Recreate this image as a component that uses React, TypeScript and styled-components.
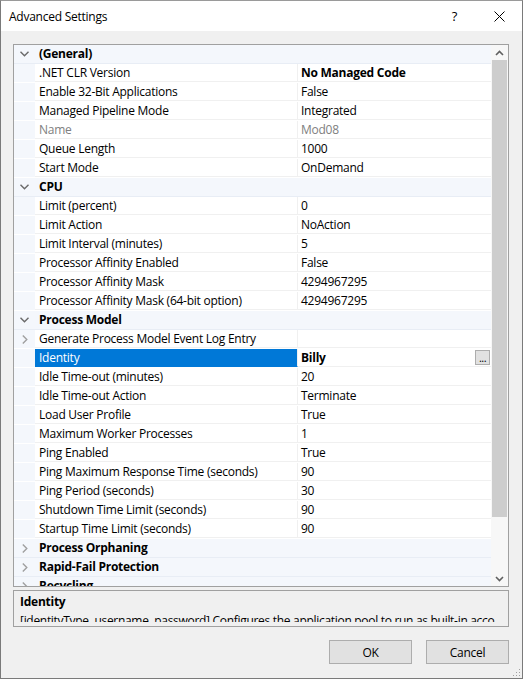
import styled, { createGlobalStyle } from "styled-components"

const GlobalStyle = createGlobalStyle`
  html, body {
    margin: 0;
    padding: 0;
    background: #ffffff;
  }
  * {
    box-sizing: border-box;
  }
`

const Window = styled.div`
  width: 523px;
  height: 679px;
  border: 1px solid #7a7a7a;
  border-top-color: #9a9a9a;
  background: #f0f0f0;
  display: flex;
  flex-direction: column;
  font-family: "Open Sans", "Noto Sans", sans-serif;
  font-size: 12px;
  letter-spacing: -0.25px;
  color: #000000;
  position: relative;
  overflow: hidden;
`

const TitleBar = styled.div`
  height: 30px;
  background: #ffffff;
  display: flex;
  align-items: center;
  padding-left: 8px;
`

const Title = styled.div`
  flex: 1;
  font-size: 12px;
`

const TitleButton = styled.div`
  width: 45px;
  height: 30px;
  display: flex;
  align-items: center;
  justify-content: center;
  font-size: 13px;
`

const Body = styled.div`
  flex: 1;
  display: flex;
  flex-direction: column;
  padding: 13px 13px 0 12px;
`

const GridBox = styled.div`
  height: 543px;
  border: 1px solid #a0a0a0;
  background: #ffffff;
  display: flex;
`

const Rows = styled.div`
  flex: 1;
  overflow: hidden;
  display: flex;
  flex-direction: column;
`

const Row = styled.div<{ $category?: boolean }>`
  flex: none;
  height: 19px;
  display: grid;
  grid-template-columns: 21px 263px 1fr;
  background: ${(p) => (p.$category ? "#f4f7fc" : "#ffffff")};
  border-bottom: 1px solid ${(p) => (p.$category ? "#e8edf5" : "transparent")};
`

const Gutter = styled.div`
  background: #f4f7fc;
  display: flex;
  align-items: center;
  justify-content: center;
`

const CategoryLabel = styled.div`
  grid-column: 2 / 4;
  font-weight: 700;
  padding-left: 4px;
  line-height: 18px;
  white-space: nowrap;
`

const NameCell = styled.div<{ $selected?: boolean; $disabled?: boolean }>`
  padding-left: 4px;
  line-height: 18px;
  white-space: nowrap;
  overflow: hidden;
  background: ${(p) => (p.$selected ? "#0078d7" : "#ffffff")};
  color: ${(p) => (p.$selected ? "#ffffff" : p.$disabled ? "#808080" : "#000000")};
  border-bottom: 1px solid ${(p) => (p.$selected ? "#0078d7" : "#f0f0f0")};
  border-right: 1px solid #f0f0f0;
`

const ValueCell = styled.div<{ $bold?: boolean; $disabled?: boolean }>`
  padding-left: 3px;
  padding-right: 1px;
  line-height: 18px;
  white-space: nowrap;
  overflow: hidden;
  display: flex;
  align-items: center;
  font-weight: ${(p) => (p.$bold ? 700 : 400)};
  color: ${(p) => (p.$disabled ? "#808080" : "#000000")};
  border-bottom: 1px solid #f0f0f0;
`

const EllipsisButton = styled.div`
  margin-left: auto;
  width: 15px;
  height: 15px;
  border: 1px solid #adadad;
  background: #e1e1e1;
  font-weight: 400;
  font-size: 11px;
  line-height: 14px;
  text-align: center;
  letter-spacing: -0.5px;
`

const ScrollBar = styled.div`
  width: 17px;
  background: #f7f7f7;
  display: flex;
  flex-direction: column;
  align-items: center;
`

const ScrollArrow = styled.div`
  height: 15px;
  width: 17px;
  display: flex;
  align-items: center;
  justify-content: center;
`

const ScrollTrack = styled.div`
  flex: 1;
  width: 15px;
  padding-bottom: 54px;
  display: flex;
`

const ScrollThumb = styled.div`
  flex: 1;
  background: #cdcdcd;
`

const DescPanel = styled.div`
  margin-top: 3px;
  height: 37px;
  border: 1px solid #a0a0a0;
  padding: 1px 3px 0 6px;
`

const DescContent = styled.div`
  height: 30px;
  overflow: hidden;
  line-height: 19px;
  white-space: nowrap;
`

const DescTitle = styled.div`
  font-weight: 700;
`

const DescText = styled.div`
  letter-spacing: -0.3px;
`

const Footer = styled.div`
  display: flex;
  justify-content: flex-end;
  gap: 14px;
  padding-top: 13px;
`

const Button = styled.div`
  width: 83px;
  height: 24px;
  border: 1px solid #adadad;
  background: #e1e1e1;
  display: flex;
  align-items: center;
  justify-content: center;
`

const Grip = styled.svg`
  position: absolute;
  right: 1px;
  bottom: 1px;
`

type Prop = {
  name: string
  value?: string
  bold?: boolean
  disabled?: boolean
  selected?: boolean
  expandable?: boolean
  button?: boolean
}

type Item = { category: string; expanded: boolean; props: Prop[] }

const items: Item[] = [
  {
    category: "(General)",
    expanded: true,
    props: [
      { name: ".NET CLR Version", value: "No Managed Code", bold: true },
      { name: "Enable 32-Bit Applications", value: "False" },
      { name: "Managed Pipeline Mode", value: "Integrated" },
      { name: "Name", value: "Mod08", disabled: true },
      { name: "Queue Length", value: "1000" },
      { name: "Start Mode", value: "OnDemand" },
    ],
  },
  {
    category: "CPU",
    expanded: true,
    props: [
      { name: "Limit (percent)", value: "0" },
      { name: "Limit Action", value: "NoAction" },
      { name: "Limit Interval (minutes)", value: "5" },
      { name: "Processor Affinity Enabled", value: "False" },
      { name: "Processor Affinity Mask", value: "4294967295" },
      { name: "Processor Affinity Mask (64-bit option)", value: "4294967295" },
    ],
  },
  {
    category: "Process Model",
    expanded: true,
    props: [
      { name: "Generate Process Model Event Log Entry", value: "", expandable: true },
      { name: "Identity", value: "Billy", bold: true, selected: true, button: true },
      { name: "Idle Time-out (minutes)", value: "20" },
      { name: "Idle Time-out Action", value: "Terminate" },
      { name: "Load User Profile", value: "True" },
      { name: "Maximum Worker Processes", value: "1" },
      { name: "Ping Enabled", value: "True" },
      { name: "Ping Maximum Response Time (seconds)", value: "90" },
      { name: "Ping Period (seconds)", value: "30" },
      { name: "Shutdown Time Limit (seconds)", value: "90" },
      { name: "Startup Time Limit (seconds)", value: "90" },
    ],
  },
  { category: "Process Orphaning", expanded: false, props: [] },
  { category: "Rapid-Fail Protection", expanded: false, props: [] },
  { category: "Recycling", expanded: false, props: [] },
]

function Chevron({ open }: { open: boolean }) {
  return open ? (
    <svg width="9" height="6" viewBox="0 0 9 6">
      <polyline points="0.5,0.8 4.5,4.8 8.5,0.8" fill="none" stroke="#6a6a6a" strokeWidth="1.4" />
    </svg>
  ) : (
    <svg width="6" height="9" viewBox="0 0 6 9">
      <polyline points="0.8,0.5 4.8,4.5 0.8,8.5" fill="none" stroke="#a0a0a0" strokeWidth="1.4" />
    </svg>
  )
}

function ArrowIcon({ up }: { up: boolean }) {
  return (
    <svg width="9" height="6" viewBox="0 0 9 6">
      <polyline
        points={up ? "1,5 4.5,1.5 8,5" : "1,1 4.5,4.5 8,1"}
        fill="none"
        stroke="#606060"
        strokeWidth="1.6"
      />
    </svg>
  )
}

export default function App() {
  return (
    <>
      <GlobalStyle />
      <Window>
        <TitleBar>
          <Title>Advanced Settings</Title>
          <TitleButton>?</TitleButton>
          <TitleButton>
            <svg width="11" height="11" viewBox="0 0 11 11">
              <path d="M0.5 0.5 L10.5 10.5 M10.5 0.5 L0.5 10.5" stroke="#000" strokeWidth="1" />
            </svg>
          </TitleButton>
        </TitleBar>
        <Body>
          <GridBox>
            <Rows>
              {items.map((item) => (
                <div key={item.category}>
                  <Row $category>
                    <Gutter>
                      <Chevron open={item.expanded} />
                    </Gutter>
                    <CategoryLabel>{item.category}</CategoryLabel>
                  </Row>
                  {item.props.map((p) => (
                    <Row key={p.name}>
                      <Gutter>{p.expandable && <Chevron open={false} />}</Gutter>
                      <NameCell $selected={p.selected} $disabled={p.disabled}>
                        {p.name}
                      </NameCell>
                      <ValueCell $bold={p.bold} $disabled={p.disabled}>
                        {p.value}
                        {p.button && <EllipsisButton>...</EllipsisButton>}
                      </ValueCell>
                    </Row>
                  ))}
                </div>
              ))}
            </Rows>
            <ScrollBar>
              <ScrollArrow>
                <ArrowIcon up />
              </ScrollArrow>
              <ScrollTrack>
                <ScrollThumb />
              </ScrollTrack>
              <ScrollArrow>
                <ArrowIcon up={false} />
              </ScrollArrow>
            </ScrollBar>
          </GridBox>
          <DescPanel>
            <DescContent>
              <DescTitle>Identity</DescTitle>
              <DescText>
                [identityType, username, password] Configures the application pool to run as built-in acco...
              </DescText>
            </DescContent>
          </DescPanel>
          <Footer>
            <Button>OK</Button>
            <Button>Cancel</Button>
          </Footer>
        </Body>
        <Grip width="10" height="10" viewBox="0 0 10 10">
          {[
            [8, 2],
            [8, 5],
            [5, 5],
            [8, 8],
            [5, 8],
            [2, 8],
          ].map(([x, y]) => (
            <rect key={`${x}-${y}`} x={x} y={y} width="1" height="1" fill="#a0a0a0" />
          ))}
        </Grip>
      </Window>
    </>
  )
}
